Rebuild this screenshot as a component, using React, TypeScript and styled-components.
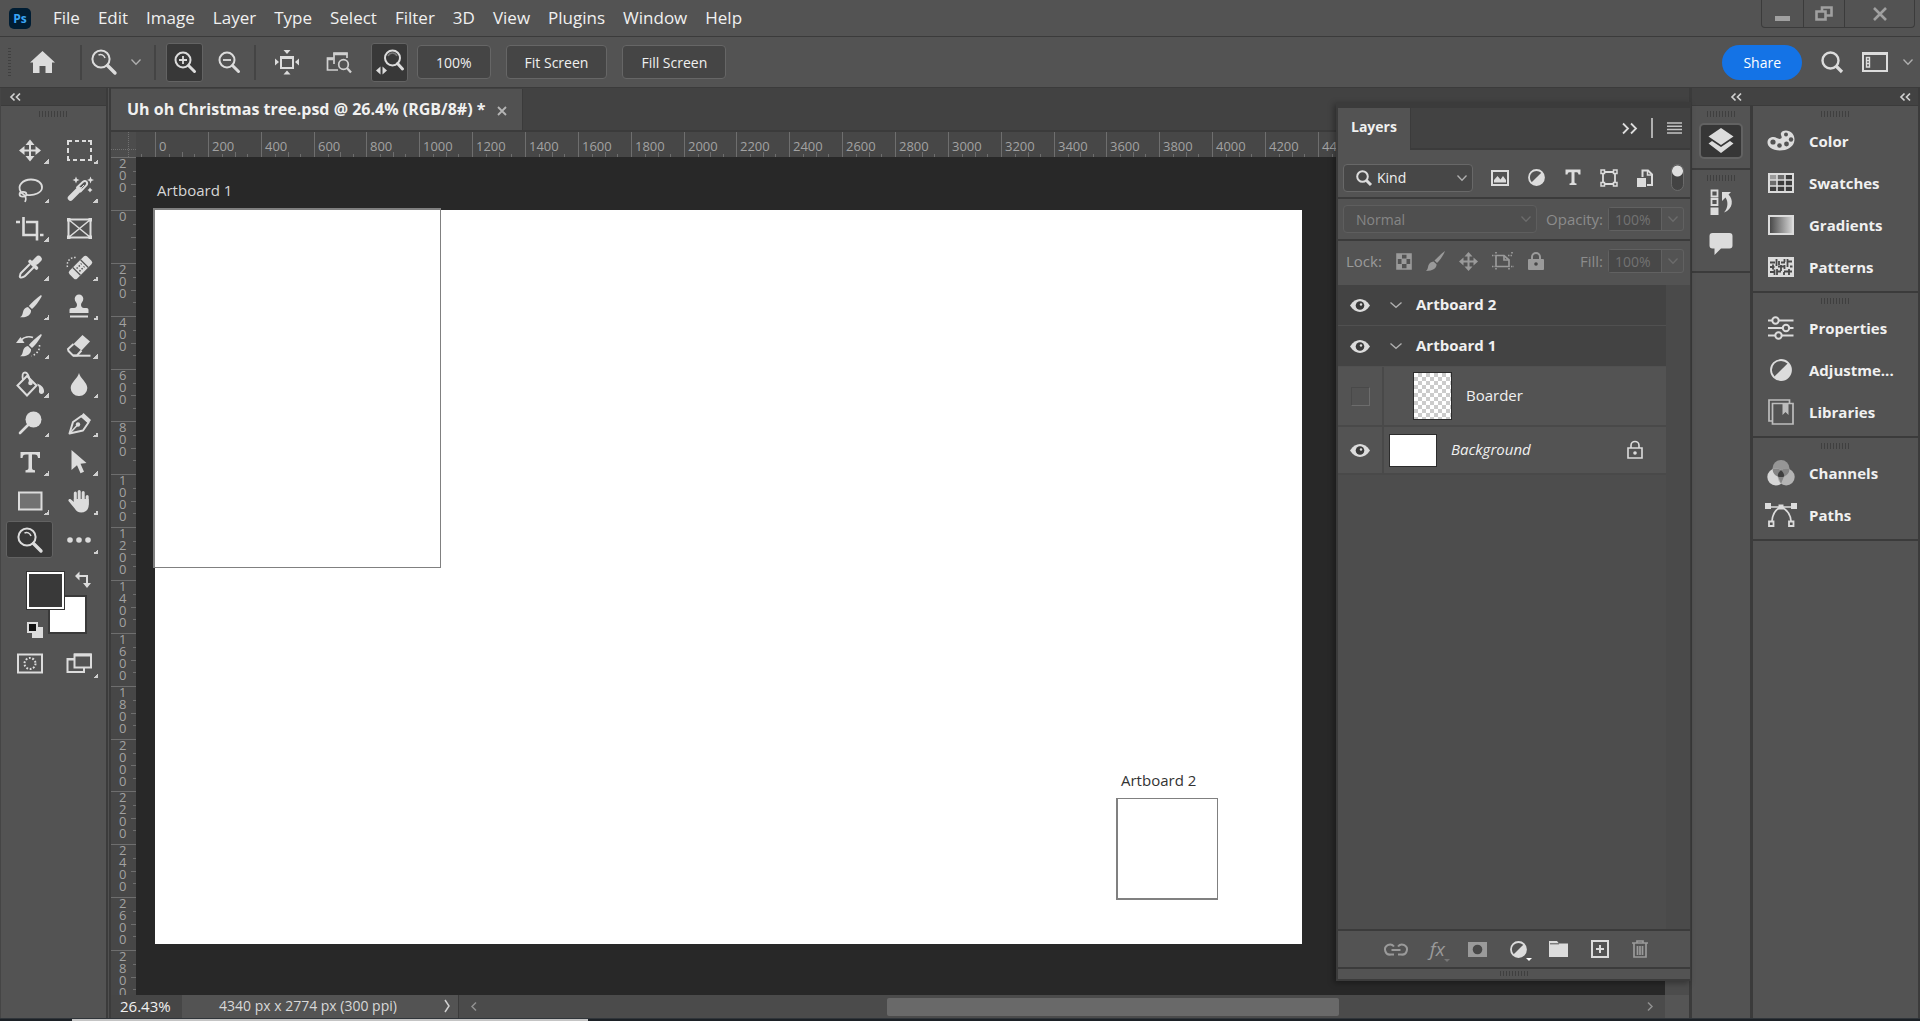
import React from "react";
import styled, { createGlobalStyle, css } from "styled-components";

const c = {
  panel: "#535353",
  strip: "#424242",
  line: "#3b3b3b",
  canvas: "#282828",
  ruler: "#474747",
  tick: "#6e6e6e",
  icon: "#dcdcdc",
  dim: "#9a9a9a",
  text: "#f0f0f0",
};

const Global = createGlobalStyle`
  * { box-sizing: border-box; }
  body { margin: 0; background: ${c.panel}; overflow: hidden; }
  body, button, input, select { font-family: "Open Sans", "Noto Sans", sans-serif; font-size: 15px; color: ${c.text}; }
  button { border: 0; padding: 0; background: none; }
  svg { display: block; flex: none; overflow: visible; }
`;

/* ---------- icons ---------- */

type IconProps = { w?: number; h?: number; color?: string; sw?: number; children: React.ReactNode };
const Icon = ({ w = 28, h = w, color = c.icon, sw = 2, children }: IconProps) => (
  <svg width={w} height={h} viewBox={`0 0 ${w} ${h}`} fill="none" stroke={color} strokeWidth={sw} color={color} aria-hidden="true">
    {children}
  </svg>
);
const solid = { fill: "currentColor", stroke: "none" };

const MoveIcon = () => (
  <Icon><path d="M14 7v15M6 14.500h16" /><path {...solid} d="M14 3.500l4.500 5.500h-9zM14 25.500l4.500-5.500h-9zM3 14.500l5.500-4.500v9zM25 14.500l-5.500-4.500v9z" /></Icon>
);
const MarqueeIcon = () => (
  <Icon><path d="M3 9V5h4M10 5h4M17 5h4M23 5h3v4M26 12v4M26 19v5h-3M20 24h-5M12 24H8M5 24H3v-4M3 17v-5" /></Icon>
);
const LassoIcon = () => (
  <Icon sw={1.800}><path d="M5 17C.500 10.500 7 4.500 15 4.500c7 0 11.500 4 11 8.500-.6 4.500-7 8-15.500 6.800" /><ellipse cx="7" cy="19.300" rx="3.400" ry="2.400" /><path d="M5 17.500c3 2 6.500 4.500 4 9.500" strokeWidth="1.600" /></Icon>
);
const Spark = ({ x, y, r = 3.500 }: { x: number; y: number; r?: number }) => (
  <path {...solid} d={`M${x} ${y - r}l1 ${r - 1} ${r - 1} 1 -${r - 1} 1 -1 ${r - 1} -1 -${r - 1} -${r - 1} -1 ${r - 1} -1z`} />
);
const WandIcon = () => (
  <Icon><path d="M5.500 23L14 14.500" strokeWidth="5.500" strokeLinecap="round" /><path d="M11.500 13l6.500-6.300c2.600-2 5.300.6 3.500 3.500L15 17" /><path d="M14 15l5-5" strokeWidth="1" /><Spark x={11} y={5} /><Spark x={25.500} y={5} /><Spark x={25} y={15} r={2.500} /></Icon>
);
const CropIcon = () => (
  <Icon sw={2.600}><path d="M0 8h4M7.500 3v18h13.500M24 21h3.500M10 8h11v18.500" /></Icon>
);
const FrameIcon = () => (
  <Icon><path d="M3.500 5.500h22v18h-22z" /><path d="M3.500 5.500l22 18M25.500 5.500l-22 18" strokeWidth="1.600" /><path {...solid} d="M2 4h3.500v3.500H2zM23.500 4H27v3.500h-3.500zM2 21.500h3.500V25H2zM23.500 21.500H27V25h-3.500z" /></Icon>
);
const DropperIcon = () => (
  <Icon><path d="M14 11L5 20c-1 1-.6 2-1.200 3.200 0 1 1 1.600 1.800 1.200C7 24 8 24 9 23l9-9" /><path d="M20 8.500l2.500-2.500" strokeWidth="6.500" strokeLinecap="round" /><path d="M14 8.500l6.500 6.500" strokeWidth="3.600" strokeLinecap="round" /><path d="M16 11.500l3-3" strokeWidth="5" /></Icon>
);
const BandageIcon = () => (
  <Icon>
    <g transform="rotate(-45 15.500 14.500)"><rect {...solid} x="3" y="9" width="25" height="11" rx="2.500" /><path d="M10 9v11M21 9v11" stroke={c.panel} strokeWidth="1.200" />
      <path d="M12 12.500h7M12 16.500h7" stroke={c.panel} strokeWidth="1.500" strokeDasharray="1.500 1.500" /></g>
    <path d="M2.500 14c-1.500-6 3.500-11 10-9" strokeWidth="1.500" strokeDasharray="1.500 1.800" />
  </Icon>
);
const brushPaths = (
  <>
    <path {...solid} d="M25 3c.8.500.8 1 .5 1.700C22.500 10 19 14.500 16 17l-3.200-3C16 10.500 20 6.500 25 3z" />
    <path {...solid} d="M12 15l3 3.200c.4 4-3.500 7.800-11 7 2.300-1.200 2.500-3 3-5.200.600-2.800 2.600-4.600 5-5z" />
  </>
);
const BrushIcon = () => <Icon>{brushPaths}</Icon>;
const HistoryBrushIcon = () => (
  <Icon>{brushPaths}<path {...solid} d="M0 12l4.500-6 4 6z" /><path d="M5 9c3-3 8-4 12-2.500" strokeWidth="1.700" /><path d="M23.500 14c.5 5-2.500 9-8 11" strokeWidth="1.600" strokeDasharray="1.600 2" /></Icon>
);
const StampIcon = () => (
  <Icon><path {...solid} d="M14 2.500a4.300 4.300 0 014.300 4.300c0 3-2.300 3.700-2.300 6 0 1.700 1 3.200 3 3.200h2.500c1.300 0 2 .8 2 2V21H4.500v-3c0-1.200.7-2 2-2H9c2 0 3-1.500 3-3.200 0-2.300-2.300-3-2.300-6A4.300 4.300 0 0114 2.500z" /><path d="M5 24.500h18" /></Icon>
);
const EraserIcon = () => (
  <Icon><path {...solid} d="M17.500 4l7.500 6.500-8.500 9-8-6.500z" /><path d="M8.500 13L3 18l.5 2 4.500 4.500h4l4.500-5" /><path d="M8 24.700h17.500" /></Icon>
);
const BucketIcon = () => (
  <Icon><path d="M11 6l9.500 9.500L11 25.500l-9.500-10z" /><path d="M7 10C6 5 6.500 2.500 9 2.500c2.500 0 4 3 5 9" strokeWidth="1.800" /><circle {...solid} cx="14.500" cy="13" r="2.300" /><path {...solid} d="M21 13.500c5 1.500 7.500 5 7 8.500-.500 2.500-4.500 2.500-5 0-.3-1.500.5-3-.2-5z" /></Icon>
);
const DropIcon = () => (
  <Icon><path {...solid} d="M14 3c1 5 8.300 9.500 8.300 15A8 8 0 0114 26a8 8 0 01-8.300-8C5.700 12.500 13 8 14 3z" /></Icon>
);
const DodgeIcon = () => (
  <Icon><circle {...solid} cx="17.500" cy="10.500" r="8" /><path d="M12 16l-8 8" strokeWidth="2.600" strokeLinecap="round" /></Icon>
);
const PenIcon = () => (
  <Icon><path d="M4.500 24.500L8 13l8.500-6 7 6.500-5.500 8z" strokeLinejoin="round" /><path d="M5 24l7-7.500" strokeWidth="1.600" /><circle {...solid} cx="13" cy="15.500" r="2.200" /><path {...solid} d="M18.500 4l7.500 7-2.500 3.500-8-7z" /></Icon>
);
const TypeIcon = () => (
  <Icon><path {...solid} d="M4.500 4h19.500v6H22c-.3-2.500-1-3.500-3.500-3.500h-2.500v13c0 2 .5 2.500 3 2.700V24.500H9.500v-2.300c2.500-.2 3-.7 3-2.700v-13H10C7.500 6.500 6.800 7.500 6.500 10h-2z" /></Icon>
);
const SelectIcon = () => (
  <Icon><path {...solid} d="M6.500 2L21.500 15l-6 .8 3.500 8-3.500 1.500-3.500-8L6.500 22z" /></Icon>
);
const RectIcon = () => <Icon><rect x="3" y="5.500" width="22.500" height="17" fill="#727272" /></Icon>;
const HandIcon = () => (
  <Icon>
    <path d="M10.300 15V6M14.200 14V4.500M18.200 15V5.500M22.200 17V9.500" strokeWidth="3" strokeLinecap="round" />
    <path {...solid} d="M8.800 12h14.900v6c0 4.500-3 7.500-7.500 7.500-3 0-5-1.500-6.500-4L3.500 14c-.5-1.500 1-2.600 2.500-1.500L9 15z" />
  </Icon>
);
const ZoomIcon = () => (
  <Icon><circle cx="11" cy="11" r="8.600" /><path d="M8.500 7c2.500-1.200 5.500 0 6.500 3" strokeWidth="1.500" /><path d="M17.500 17.500l7.500 7.500" strokeWidth="3.400" strokeLinecap="round" /></Icon>
);
const DotsIcon = () => (
  <Icon><circle {...solid} cx="5" cy="14" r="2.800" /><circle {...solid} cx="14" cy="14" r="2.800" /><circle {...solid} cx="23" cy="14" r="2.800" /></Icon>
);
const QuickMaskIcon = () => (
  <Icon><path d="M2 4.500h24v18H2z" /><circle cx="14" cy="13.500" r="5.500" strokeDasharray="1.800 1.650" /></Icon>
);
const ScreenModeIcon = () => (
  <Icon><path d="M9 9H2.500v13H19v-4M2 9.500h7" /><path d="M9.500 4.500h16.500v13H9.500z" fill={c.panel} /><path d="M9 5h17.500" strokeWidth="3" /></Icon>
);
const SwapIcon = () => (
  <Icon w={16} h={17} sw={2}><path d="M3 5h9v8" /><path {...solid} d="M0 5l4.500-4.500v9zM12 17l-4-5h8z" /></Icon>
);
const DefaultIcon = () => (
  <Icon w={16}><path {...solid} d="M5 5h11v11H5z" /><rect x="1" y="1" width="9" height="9" fill="#111" /></Icon>
);
const HomeIcon = () => (
  <Icon w={25} h={22}><path {...solid} d="M12.500 0L25 11.500h-3V22h-6.500v-7h-6v7H3V11.500H0z" /></Icon>
);
const Glass = ({ sign }: { sign?: "plus" | "minus" }) => (
  <Icon w={22}><circle cx="9" cy="9" r="7.500" /><path d="M14.500 14.500l6 6" strokeWidth="3" strokeLinecap="round" />{sign && <path d={sign === "plus" ? "M5 9h8M9 5v8" : "M5 9h8"} strokeWidth="1.800" />}</Icon>
);
const ResizeWindowIcon = () => (
  <Icon w={26}><path d="M7 8h12v11H7z" /><path d="M6 8.500h14" strokeWidth="3" /><path {...solid} d="M13 5L9.500 1h7zM13 21.500L9.500 25.500h7zM5 13L1 9.500v7zM21 13l4-3.500v7z" /></Icon>
);
const ZoomAllIcon = () => (
  <Icon w={26} h={22} sw={1.700} color="#d0d0d0"><path d="M8 7H1.500v12H12M8 13V2H21v5" /><path d="M7.500 3h14M1 8h6.500" strokeWidth="2.600" /><circle cx="17.500" cy="13.500" r="4.800" fill={c.panel} /><path d="M21 17l4 4.500" strokeWidth="2.300" /></Icon>
);
const ScrubIcon = () => (
  <Icon w={28} h={26}><circle cx="16.500" cy="9" r="7.500" /><path d="M12 7c2-4 7-4 9 0" stroke="#777" strokeWidth="1.500" /><path d="M21.500 14.500l5 5.500" strokeWidth="3" strokeLinecap="round" /><path {...solid} d="M0 21.500l4.500-4v8zM11 21.500l-4.500-4v8z" /></Icon>
);
const SearchIcon = () => (
  <Icon w={22} sw={2.400}><circle cx="9.500" cy="9.500" r="8" /><path d="M15 15l6 6" strokeWidth="3.200" /></Icon>
);
const WorkspaceIcon = () => (
  <Icon w={26} h={20}><path d="M1 1h24v18H1z" /><path d="M0 1.500h26" strokeWidth="3" /><path d="M4.500 5.500h3v9.500h-3zM4.500 8.500h3M4.500 11.500h3" strokeWidth="1.400" /></Icon>
);
const Chevron = ({ color = "#b0b0b0", w = 10 }: { color?: string; w?: number }) => (
  <Icon w={w} h={6} color={color} sw={1.300}><path d={`M.5 .5L${w / 2} 5.300 ${w - 0.5} .5`} /></Icon>
);
const Collapse = () => <Icon w={11} h={8} sw={1.700} color="#d0d0d0"><path d="M4.500.5L1 4l3.500 3.500M10 .5L6.500 4 10 7.500" /></Icon>;

const HalfIcon = ({ s = 18 }: { s?: number }) => (
  <Icon w={s}><circle cx={s / 2} cy={s / 2} r={s / 2 - 1} strokeWidth="1.800" /><path {...solid} transform={`rotate(-45 ${s / 2} ${s / 2})`} d={`M1 ${s / 2}a${s / 2 - 1} ${s / 2 - 1} 0 00${s - 2} 0z`} /></Icon>
);
const PictureIcon = () => <Icon w={18} h={16}><path d="M1 1h16v14H1z" /><path {...solid} d="M3 12.500V10l3.500-4 3 3.500L12 6l3 4v2.500z" /></Icon>;
const SmallType = () => <Icon w={16} h={17}><path {...solid} d="M.5.5h15v5h-2c-.2-1.700-.8-2.300-2.500-2.300H9.500v9.300c0 1.500.3 1.800 2 2v1.500h-7V14.500c1.700-.2 2-.5 2-2V3.200H5C3.300 3.200 2.700 3.800 2.500 5.500h-2z" /></Icon>;
const ShapeIcon = () => (
  <Icon w={18}><path d="M3 3h12v12H3z" strokeWidth="1.800" /><path d="M1 1h3.500v3.500H1zM13.500 1H17v3.500h-3.500zM1 13.500h3.500V17H1zM13.500 13.500H17V17h-3.500z" strokeWidth="1.500" fill={c.panel} /></Icon>
);
const SmartIcon = () => (
  <Icon w={16} h={18}><path d="M5.500 8V1.500h5.500L15 5.500V16h-5" /><path d="M10.500 1.500V6H15" strokeWidth="1.500" /><path {...solid} d="M0 9h9v9H0z" /></Icon>
);
const CheckerIcon = () => (
  <Icon w={16} h={17} color={c.dim}><path d="M1 1h14v15H1z" strokeWidth="1.600" /><path {...solid} d="M1 1h5v5H1zM10.500 1H15v5h-4.500zM5.500 5.500h5V11h-5zM1 11h5v5H1zM10.500 11H15v5h-4.500z" /></Icon>
);
const SmallBrush = () => (
  <Icon w={19} h={20} color={c.dim}><path {...solid} d="M19 0c-1.500 4-4.500 8.500-8 12L8.500 9.500C12 6 15.500 2.500 19 0z" /><path {...solid} d="M7.500 10.500l3 2.800C11 17 7 20 0 20c2-1.500 1.700-3.300 2.300-5.300.6-2.200 2.700-4 5.200-4.200z" /></Icon>
);
const SmallMove = () => (
  <Icon w={19} color={c.dim}><path d="M9.500 3v13M3 9.500h13" /><path {...solid} d="M9.500 0l4 4.500h-8zM9.500 19l4-4.500h-8zM0 9.500l4.500-4v8zM19 9.500l-4.500-4v8z" /></Icon>
);
const ArtboardLock = () => (
  <Icon w={22} h={18} color={c.dim} sw={1.700}><path d="M4 3.500h8l5 4.500v6.500H4z" /><path d="M12 3.500V8h5" /><path d="M0 3.500h3M4 0v2M19 14.500h3M17 16v2M0 14.500h3M4 16v2M16 3.500h4M20 0v2" strokeDasharray="1.500 1" /></Icon>
);
const LockSolid = () => (
  <Icon w={16} h={18} color={c.dim}><path d="M4 8V5a4 4 0 018 0v3" /><rect {...solid} y="7" width="16" height="11" rx="1" /><circle cx="8" cy="12" r="1.800" fill="#474747" stroke="none" /></Icon>
);
const LockOutline = () => (
  <Icon w={16} h={18} sw={1.600}><path d="M4 7V4.500a4 4 0 018 0V7" /><path d="M1 7h14v10H1z" /><circle {...solid} cx="8" cy="12" r="1.800" /></Icon>
);
const EyeIcon = () => (
  <Icon w={20} h={13}><path {...solid} d="M0 6.500C3 2 6.500 0 10 0s7 2 10 6.500C17 11 13.500 13 10 13S3 11 0 6.500z" /><circle cx="10" cy="6.500" r="4.300" fill="#3a3a3a" stroke="none" /><circle {...solid} cx="11" cy="5.500" r="1.200" /></Icon>
);
const LinkIcon = () => (
  <Icon w={22} h={13} color={c.dim}><path d="M9 3.500A5 5 0 106 11.500h3M13 3.500a5 5 0 113 8h-3" /><path d="M6.500 7h9" /></Icon>
);
const MaskIcon = () => (
  <Icon w={19} h={15} color={c.dim}><path {...solid} d="M0 0h19v15H0z" /><circle cx="9.500" cy="7.500" r="4.800" fill="#484848" stroke="none" /></Icon>
);
const FolderIcon = () => <Icon w={19} h={16}><path {...solid} d="M0 0h8l2 2.500h9V16H0z" /><path d="M1 2.800h9" stroke={c.panel} strokeWidth="1" /></Icon>;
const PlusBoxIcon = () => <Icon w={18}><path d="M1 1h16v16H1zM5 9h8M9 5v8" /></Icon>;
const TrashIcon = () => (
  <Icon w={16} h={18} color={c.dim} sw={1.700}><path d="M0 3h16M5 3V1h6v2M2 3.500V17h12V3.500M5.500 6v9M8 6v9M10.500 6v9" /></Icon>
);
const LayersIcon = () => (
  <Icon w={26} h={26}><path {...solid} d="M13 0l12.500 8.500L13 17 .5 8.500z" /><path {...solid} d="M.5 15.500L4 13l9 6 9-6 3.500 2.500L13 25z" /></Icon>
);
const HistoryIcon = () => (
  <Icon w={24} h={26}><path d="M2.500 1.500h6v6h-6zM2.500 10h6v6h-6z" strokeWidth="1.800" /><path {...solid} d="M1.500 18.500h8V26h-8z" /><path {...solid} d="M13 3h9l-2.500 2.500C24.500 10 24.500 20 15 23.500 19 19 19.500 13 16.500 8.500L13 12z" /></Icon>
);
const CommentIcon = () => (
  <Icon w={24} h={22}><path {...solid} d="M3.500 0h17a3 3 0 013 3v9.500a3 3 0 01-3 3H12L5.500 22v-6.500h-2a3 3 0 01-3-3V3a3 3 0 013-3z" /></Icon>
);
const PaletteIcon = () => (
  <Icon w={28} h={22}><path {...solid} d="M14 3c2-3.500 8-3 11 0 2.500 3 3 6 2 9.500-1.500 4.500-7 8-14 8C5 20.500.500 16.500.500 12.500c0-4 3-5.500 6-5.500 3 0 5 3 7.500 1.500 2-1.500-1-3.500 0-5.500z" /><g fill={c.panel} stroke="none"><circle cx="19" cy="4.500" r="2" /><circle cx="24" cy="9.500" r="2.200" /><circle cx="6" cy="12" r="2.600" /><circle cx="12.500" cy="15.500" r="2.300" /><circle cx="19.500" cy="14" r="2.400" /></g></Icon>
);
const SwatchGridIcon = () => (
  <Icon w={26} h={20}><path d="M1 1h24v18H1z" fill="#3c3c3c" /><path {...solid} d="M1 1h8v6H1z" opacity=".6" /><path {...solid} d="M9 1h8v6H9zM1 7h8v6H1z" opacity=".3" /><path d="M9 1v18M17 1v18M1 7h24M1 13h24" strokeWidth="1.600" /></Icon>
);
const GradientIcon = () => (
  <Icon w={26} h={20}><defs><linearGradient id="ramp"><stop offset="0" stopColor="#444" /><stop offset="1" stopColor="#d8d8d8" /></linearGradient></defs><path d="M1 1h24v18H1z" fill="url(#ramp)" /></Icon>
);
const PatternIcon = () => (
  <Icon w={26} h={20}>
    <path {...solid} d="M0 0h26v20H0z" />
    <path d="M2 5.500h5M8.500 2v7M13 5.500h4M16.500 2v3M19.500 2v8M19.500 4.500h4.500M2 10h4.500M5 7.500v5M11 4v4M10 9.500h6M13 8v6M16.500 8v4M22 9.500h2.500M2 15h4M6.500 12.500V18M9 12v6M9 14.500h4M16 15v3M16 14.500h8M21 12v6" stroke="#474747" strokeWidth="1.800" />
  </Icon>
);
const SlidersIcon = () => (
  <Icon w={26} h={24}><path d="M0 4.500h4M11 4.500h14.500M0 12h14M21.500 12h4M0 19.500h7M14 19.500h11.500" strokeWidth="1.800" /><circle cx="7.500" cy="4.500" r="3.200" /><circle cx="18" cy="12" r="3.200" /><circle cx="10.500" cy="19.500" r="3.200" /></Icon>
);
const LibrariesIcon = () => (
  <Icon w={26} color="#bdbdbd" sw={1.700}><path d="M4.500 22H1V1h20.500v3M4.500 4.500H25V25H4.500z" /><path {...solid} d="M14.500 4.500h6V16l-3-3-3 3z" /></Icon>
);
const ChannelsIcon = () => (
  <Icon w={28} h={26}><g stroke="none"><circle cx="14" cy="8.500" r="8.500" fill="#969696" /><circle cx="8.800" cy="17" r="8.500" fill="#d6d6d6" /><circle cx="19.200" cy="17" r="8.500" fill="#b4b4b4" /><path fill="#848484" d="M5.500 9.200A8.500 8.500 0 0114 10.300a8.500 8.500 0 018.500-1.200A8.500 8.500 0 0117 16.500L14 23.700l-3-7.200a8.500 8.500 0 01-5.500-7.300z" /><path fill="#3e3e3e" d="M14 10.200c2.500 2 3.200 4 3.200 6.200-2 .8-4.400.8-6.400 0 0-2.200.7-4.200 3.200-6.200z" /></g></Icon>
);
const PathsIcon = () => (
  <Icon w={32} h={24}><path d="M5 4h22M15 4.500C9.500 7 7.500 12 7 18M17 4.500c5.500 2.500 8.500 7.500 9 13.500" strokeWidth="1.700" /><path {...solid} d="M0 0h6v6H0zM26 0h6v6h-6zM13.500 1.500h5v5h-5z" /><path d="M4 18.500h4.500V23H4zM24 18.500h4.500V23H24z" strokeWidth="1.800" fill={c.panel} /></Icon>
);

/* ---------- shell ---------- */

const Shell = styled.div`
  display: flex;
  flex-direction: column;
  height: 100vh;
  min-height: 720px;
  background: ${c.panel};
`;
const MenuBar = styled.header`
  display: flex;
  align-items: center;
  height: 37px;
  padding-left: 9px;
  border-bottom: 1px solid ${c.line};
`;
const Logo = styled.span`
  display: grid;
  place-items: center;
  width: 22px;
  height: 21px;
  border-radius: 5px;
  background: #001d33;
  color: #3aa5f5;
  font-size: 12px;
  font-weight: 700;
`;
const Menus = styled.nav`
  display: flex;
  gap: 18px;
  margin-left: 22px;
`;
const MenuButton = styled.button`
  font-size: 17px;
  line-height: 24px;
`;
const WindowControls = styled.div`
  display: flex;
  align-self: flex-start;
  height: 28px;
  margin: 0 5px 0 auto;
  border: 1px solid ${c.line};
  border-top: 0;
  border-radius: 0 0 4px 4px;
`;
const WindowButton = styled.button<{ $wide?: boolean }>`
  display: grid;
  place-items: center;
  width: ${(p) => (p.$wide ? 70 : 41)}px;
  & + & { border-left: 1px solid ${c.line}; }
`;
const OptionsBar = styled.div`
  display: flex;
  align-items: center;
  height: 51px;
  padding: 0 7px 0 8px;
  border-bottom: 1px solid ${c.line};
`;
const DotGrip = styled.span`
  width: 3px;
  height: 28px;
  background: repeating-linear-gradient(#404040 0 1px, transparent 1px 3px);
`;
const Rule = styled.span`
  width: 2px;
  height: 35px;
  background: #444;
`;
const Group = styled.div<{ $gap?: number; $left?: number; $right?: number; $end?: boolean }>`
  display: flex;
  align-items: center;
  gap: ${(p) => p.$gap ?? 0}px;
  margin-left: ${(p) => (p.$end ? "auto" : `${p.$left ?? 0}px`)};
  margin-right: ${(p) => p.$right ?? 0}px;
`;
const OptionButton = styled.button<{ $on?: boolean }>`
  display: grid;
  place-items: center;
  width: 37px;
  height: 39px;
  border-radius: 3px;
  ${(p) => p.$on && css`background: #383838; border: 1px solid #636363;`}
`;
const PushButton = styled.button`
  height: 34px;
  padding: 0 18px;
  border: 1px solid #666;
  border-radius: 4px;
  background: #454545;
  font-size: 14px;
`;
const ShareButton = styled.button`
  height: 35px;
  padding: 0 21px;
  border-radius: 18px;
  background: #1473e6;
  color: #fff;
  font-size: 14px;
`;
const IconButton = styled.button`
  display: grid;
  place-items: center;
`;

const Body = styled.div`
  display: flex;
  flex: 1;
  min-height: 0;
`;
const Footer = styled.footer`
  height: 3px;
  border-top: 1px solid #30353a;
  background: linear-gradient(90deg, #1c2126 72px, #c4c4c4 72px 588px, #1c2126 588px);
`;

/* ---------- toolbox ---------- */

const Toolbox = styled.aside`
  width: 108px;
  border-left: 1px solid #454545;
  border-right: 2px solid ${c.line};
`;
const StripHeader = styled.div`
  display: flex;
  align-items: center;
  height: 18px;
  background: ${c.strip};
  border-bottom: 1px solid ${c.line};
`;
const CollapseButton = styled(IconButton)<{ $w?: number; $end?: boolean }>`
  flex: ${(p) => (p.$w ? "none" : 1)};
  width: ${(p) => (p.$w ? `${p.$w}px` : "auto")};
  justify-items: ${(p) => (p.$end ? "end" : "start")};
  padding: 0 7px 0 9px;
`;
const Grip = styled.span<{ $h?: number }>`
  display: block;
  width: 29px;
  height: ${(p) => p.$h ?? 6}px;
  margin: 0 auto;
  background: repeating-linear-gradient(90deg, #3f3f3f 0 1px, transparent 1px 3px);
`;
const ToolGrip = styled.div`
  padding: 5px 0 13px;
`;
const ToolGrid = styled.div`
  display: grid;
  grid-template-columns: 49px 49px;
  grid-auto-rows: 39px;
  padding-left: 4px;
`;
const Tool = styled.button<{ $on?: boolean; $more?: boolean }>`
  display: grid;
  place-items: center;
  position: relative;
  margin: 1px;
  border: 1px solid transparent;
  border-radius: 3px;
  ${(p) => p.$on && css`background: #383838; border-color: #626262;`}
  ${(p) => p.$more && css`
    &::after {
      content: "";
      position: absolute;
      right: 3px;
      bottom: 3px;
      width: 5px;
      height: 5px;
      background: linear-gradient(135deg, transparent 50%, #cfcfcf 50%);
    }
  `}
`;
const ColorWell = styled.div`
  position: relative;
  height: 85px;
`;
const Swatch = styled.button<{ $front?: boolean }>`
  position: absolute;
  left: ${(p) => (p.$front ? 26 : 47)}px;
  top: ${(p) => (p.$front ? 13 : 36)}px;
  width: ${(p) => (p.$front ? 37 : 39)}px;
  height: ${(p) => (p.$front ? 37 : 39)}px;
  border: 2px solid ${(p) => (p.$front ? "#fff" : "#3a3a3a")};
  outline: ${(p) => (p.$front ? "1px solid #333" : "none")};
  background: ${(p) => (p.$front ? "#393939" : "#fff")};
`;
const WellButton = styled(IconButton)<{ $corner: "swap" | "reset" }>`
  position: absolute;
  left: ${(p) => (p.$corner === "swap" ? 74 : 26)}px;
  top: ${(p) => (p.$corner === "swap" ? 12 : 63)}px;
`;

/* ---------- document ---------- */

const Doc = styled.main`
  position: relative;
  display: flex;
  flex: 1;
  flex-direction: column;
  min-width: 0;
  border-left: 1px solid #505050;
  border-right: 2px solid ${c.line};
  padding-left: 2px;
  background: ${c.line};
`;
const TabStrip = styled.div`
  display: flex;
  height: 44px;
  padding-top: 1px;
  background: ${c.strip};
  border-bottom: 2px solid ${c.line};
`;
const DocTab = styled.div`
  display: flex;
  align-items: center;
  gap: 12px;
  padding: 0 15px 2px 16px;
  background: #515151;
  border-right: 1px solid ${c.line};
  font-size: 16px;
  font-weight: 700;
`;
const Workspace = styled.div`
  display: grid;
  flex: 1;
  grid-template: 25px minmax(0, 1fr) / 25px minmax(0, 1fr) 24px;
  min-height: 0;
`;
const Corner = styled.div`
  background:
    repeating-linear-gradient(#707070 0 1px, transparent 1px 2px) 17px 0 / 1px 100% no-repeat,
    repeating-linear-gradient(90deg, #707070 0 1px, transparent 1px 2px) 0 17px / 100% 1px no-repeat,
    #4c4c4c;
`;
const HRuler = styled.div`
  display: flex;
  grid-column: 2 / 4;
  overflow: hidden;
  background: ${c.ruler};
`;
const VRuler = styled.div`
  display: flex;
  flex-direction: column;
  overflow: hidden;
  background: ${c.ruler};
`;
const HMark = styled.div`
  display: flex;
  flex: none;
  flex-direction: column;
  justify-content: space-between;
  border-left: 1px solid ${c.tick};
  color: #a2a2a2;
  font-size: 13px;
  line-height: 16px;
  padding-top: 6px;
  & > b { font-weight: 400; height: 14px; padding-left: 3px; }
  & > i { height: 5px; background:
    linear-gradient(${c.tick}, ${c.tick}) 25% 100% / 1px 3px no-repeat,
    linear-gradient(${c.tick}, ${c.tick}) 50% 100% / 1px 5px no-repeat,
    linear-gradient(${c.tick}, ${c.tick}) 75% 100% / 1px 3px no-repeat; }
`;
const VMark = styled.div`
  display: flex;
  flex: none;
  justify-content: space-between;
  border-top: 1px solid ${c.tick};
  color: #a2a2a2;
  font-size: 13px;
  line-height: 12px;
  padding-left: 8px;
  & > b { font-weight: 400; width: 8px; margin-top: -1px; word-break: break-all; }
  & > i { width: 5px; background:
    linear-gradient(${c.tick}, ${c.tick}) 100% 25% / 3px 1px no-repeat,
    linear-gradient(${c.tick}, ${c.tick}) 100% 50% / 5px 1px no-repeat,
    linear-gradient(${c.tick}, ${c.tick}) 100% 75% / 3px 1px no-repeat; }
`;
const Canvas = styled.div`
  position: relative;
  overflow: hidden;
  background: ${c.canvas};
`;
const VScroll = styled.div`
  background: #4c4c4c;
`;
const Paper = styled.div`
  position: absolute;
  left: 19px;
  top: 53px;
  width: 1147px;
  height: 734px;
  background: #fff;
`;
const Artboard = styled.div<{ $second?: boolean }>`
  position: absolute;
  left: ${(p) => (p.$second ? 980 : 17)}px;
  top: ${(p) => (p.$second ? 641 : 51)}px;
  width: ${(p) => (p.$second ? 102 : 288)}px;
  height: ${(p) => (p.$second ? 102 : 360)}px;
  border: solid #808080;
  border-width: ${(p) => (p.$second ? "1px 1px 2px 2px" : "2px 1px 1px 2px")};
  background: #fff;
`;
const ArtboardName = styled.span<{ $second?: boolean }>`
  position: absolute;
  left: ${(p) => (p.$second ? 985 : 21)}px;
  top: ${(p) => (p.$second ? 613 : 23)}px;
  color: ${(p) => (p.$second ? "#333" : "#d6d6d6")};
  font-size: 15px;
  line-height: 20px;
`;
const StatusBar = styled.div`
  display: flex;
  align-items: stretch;
  height: 23px;
  background: ${c.panel};
`;
const ZoomField = styled.input`
  width: 72px;
  padding: 0 0 2px 9px;
  border: 0;
  border-right: 1px solid ${c.panel};
  background: #464646;
`;
const DocInfo = styled.button`
  display: flex;
  align-items: center;
  justify-content: space-between;
  width: 276px;
  padding: 0 8px 2px 36px;
  border-right: 1px solid ${c.line};
  color: #d8d8d8;
  font-size: 14px;
`;
const HScroll = styled.div`
  display: flex;
  flex: 1;
  align-items: center;
  justify-content: space-between;
  padding: 0 12px;
  background: #4b4b4b;
`;
const Track = styled.div`
  display: flex;
  flex: 1;
  justify-content: center;
  height: 18px;
`;
const Thumb = styled.div`
  width: 452px;
  margin-left: 102px;
  border-radius: 2px;
  background: #696969;
`;
const ScrollCorner = styled.div`
  width: 24px;
  background: #555;
`;

/* ---------- layers panel ---------- */

const LayersPanel = styled.section`
  position: absolute;
  top: 14px;
  right: -2px;
  bottom: 37px;
  display: flex;
  flex-direction: column;
  width: 355px;
  border: solid ${c.line};
  border-width: 6px 1px 2px 2px;
  background: ${c.panel};
  box-shadow: -2px 2px 6px rgba(0, 0, 0, 0.35);
`;
const PanelTabs = styled.div`
  display: flex;
  height: 42px;
  background: ${c.strip};
`;
const PanelTab = styled.button`
  padding: 0 13px 6px;
  background: ${c.panel};
  font-size: 14px;
  font-weight: 700;
`;
const PanelTools = styled.div`
  display: flex;
  flex: 1;
  align-items: center;
  justify-content: flex-end;
  gap: 14px;
  padding-right: 8px;
  border-left: 1px solid ${c.line};
  border-bottom: 2px solid ${c.line};
`;
const PanelRow = styled.div<{ $h: number; $top?: number; $bottom?: number; $last?: boolean }>`
  display: flex;
  align-items: center;
  height: ${(p) => p.$h}px;
  padding: ${(p) => p.$top ?? 0}px 6px ${(p) => p.$bottom ?? 0}px 5px;
  border-bottom: ${(p) => (p.$last ? "0" : `2px solid ${c.line}`)};
  color: ${c.dim};
`;
const SelectBox = styled.label<{ $w: number; $dim?: boolean }>`
  display: grid;
  grid-template-columns: auto 1fr auto;
  align-items: center;
  width: ${(p) => p.$w}px;
  height: 28px;
  padding: 0 5px 0 12px;
  border: 1px solid ${(p) => (p.$dim ? "#5e5e5e" : "#686868")};
  border-radius: 4px;
  background: ${(p) => (p.$dim ? "#4f4f4f" : "#474747")};
  & select {
    appearance: none;
    width: 100%;
    height: 26px;
    padding: 0 0 0 ${(p) => (p.$dim ? 0 : 5)}px;
    border: 0;
    outline: 0;
    background: none;
    font-size: 14px;
    color: ${(p) => (p.$dim ? "#868686" : c.text)};
    opacity: 1;
  }
`;
const FilterIcons = styled.div`
  display: flex;
  flex: 1;
  align-items: center;
  justify-content: space-between;
  padding: 0 18px;
`;
const FilterSwitch = styled.input`
  appearance: none;
  width: 13px;
  height: 27px;
  margin: 0;
  border: 1px solid #6a6a6a;
  border-radius: 7px;
  background: radial-gradient(circle at 50% 6px, #dedede 5px, #434343 6px);
`;
const ValueLabel = styled.label`
  display: flex;
  align-items: center;
  gap: 5px;
  margin-left: auto;
  color: #8c8c8c;
`;
const ValueBox = styled.span`
  display: flex;
  width: 76px;
  height: 24px;
  border: 1px solid #616161;
  border-radius: 3px;
  & input {
    width: 53px;
    padding: 0 0 0 6px;
    border: 0;
    border-right: 1px solid #616161;
    background: #484848;
    font-size: 14px;
    color: #727272;
  }
  & button { display: grid; flex: 1; place-items: center; }
`;
const LockTools = styled.div`
  display: flex;
  align-items: center;
  gap: 14px;
  margin-left: 14px;
`;
const LayerArea = styled.div`
  display: flex;
  flex: 1;
  min-height: 0;
  background: #4a4a4a;
`;
const LayerList = styled.ul`
  flex: 1;
  margin: 0;
  padding: 0;
  list-style: none;
  background: #4d4d4d;
`;
const LayerScroll = styled.div`
  width: 24px;
  background: #4a4a4a;
`;
const LayerItem = styled.li<{ $kind: "board" | "layer"; $h: number }>`
  display: flex;
  align-items: center;
  height: ${(p) => p.$h}px;
  border-bottom: ${(p) => (p.$kind === "board" ? "1px solid #505050" : "2px solid #494949")};
  background: ${(p) => (p.$kind === "board" ? "#434343" : c.panel)};
  font-weight: ${(p) => (p.$kind === "board" ? 700 : 400)};
`;
const EyeCell = styled.button<{ $line?: boolean }>`
  display: grid;
  align-self: stretch;
  place-items: center;
  width: 46px;
  border-right: 2px solid ${(p) => (p.$line ? "#494949" : "transparent")};
`;
const EmptyEye = styled.span`
  width: 19px;
  height: 19px;
  border: 1px solid #494949;
  border-right-color: #6c6c6c;
  border-bottom-color: #6c6c6c;
`;
const LayerName = styled.span<{ $italic?: boolean }>`
  flex: 1;
  margin-left: 14px;
  padding-bottom: 2px;
  font-style: ${(p) => (p.$italic ? "italic" : "normal")};
`;
const Thumbnail = styled.span<{ $clear?: boolean }>`
  width: ${(p) => (p.$clear ? 39 : 48)}px;
  height: ${(p) => (p.$clear ? 48 : 33)}px;
  margin-left: ${(p) => (p.$clear ? 29 : 5)}px;
  border: 1px solid #2c2c2c;
  background: ${(p) => (p.$clear ? "repeating-conic-gradient(#cbcbcb 0 25%, #fff 0 50%) 0 0 / 8px 8px" : "#fff")};
`;
const PanelFooter = styled.div`
  display: flex;
  align-items: center;
  justify-content: space-between;
  height: 40px;
  padding: 0 42px 0 47px;
  border: solid ${c.line};
  border-width: 2px 0;
`;
const FooterButton = styled(IconButton)<{ $caret?: string }>`
  position: relative;
  &::after {
    content: "";
    display: ${(p) => (p.$caret ? "block" : "none")};
    position: absolute;
    right: -5px;
    bottom: -3px;
    border: 3px solid transparent;
    border-bottom: 0;
    border-top-color: ${(p) => p.$caret};
  }
`;
const Fx = styled.span`
  color: ${c.dim};
  font-size: 19px;
  font-style: italic;
  line-height: 20px;
`;
const PanelGrip = styled.div`
  height: 10px;
  padding-top: 2px;
`;

/* ---------- docks ---------- */

const DockArea = styled.aside`
  display: flex;
  flex-direction: column;
  width: 229px;
  border-right: 2px solid ${c.line};
  border-left: 1px solid ${c.line};
`;
const DockColumns = styled.div`
  display: flex;
  flex: 1;
`;
const DockColumn = styled.div<{ $narrow?: boolean }>`
  width: ${(p) => (p.$narrow ? "61px" : "auto")};
  flex: ${(p) => (p.$narrow ? "none" : 1)};
  border-right: ${(p) => (p.$narrow ? `3px solid ${c.line}` : "0")};
`;
const DockGroup = styled.div`
  display: flex;
  flex-direction: column;
  padding: 5px 0 3px;
  border-bottom: 2px solid ${c.line};
`;
const DockRows = styled.div<{ $icons?: boolean }>`
  display: flex;
  flex-direction: column;
  align-items: ${(p) => (p.$icons ? "center" : "stretch")};
  padding: ${(p) => (p.$icons ? "0 0 3px" : "3px 0 0")};
`;
const DockRow = styled.button`
  display: grid;
  grid-template-columns: 32px 1fr;
  align-items: center;
  justify-items: center;
  gap: 12px;
  height: 42px;
  padding: 0 8px 0 12px;
  font-size: 15px;
  font-weight: 700;
  & > span { justify-self: start; }
`;
const DockIconButton = styled.button<{ $on?: boolean }>`
  display: grid;
  place-items: center;
  width: 44px;
  height: ${(p) => (p.$on ? 36 : 42)}px;
  margin: ${(p) => (p.$on ? "6px 0 3px" : "0")};
  border-radius: 5px;
  ${(p) => p.$on && css`background: #363636; border: 2px solid #626262;`}
`;

/* ---------- data ---------- */

const menus = ["File", "Edit", "Image", "Layer", "Type", "Select", "Filter", "3D", "View", "Plugins", "Window", "Help"];

const tools: [string, React.FC, boolean][] = [
  ["Move", MoveIcon, true], ["Marquee", MarqueeIcon, true],
  ["Lasso", LassoIcon, true], ["Magic wand", WandIcon, true],
  ["Crop", CropIcon, true], ["Frame", FrameIcon, false],
  ["Eyedropper", DropperIcon, true], ["Healing brush", BandageIcon, true],
  ["Brush", BrushIcon, true], ["Clone stamp", StampIcon, true],
  ["History brush", HistoryBrushIcon, true], ["Eraser", EraserIcon, true],
  ["Paint bucket", BucketIcon, true], ["Blur", DropIcon, true],
  ["Dodge", DodgeIcon, true], ["Pen", PenIcon, true],
  ["Type", TypeIcon, true], ["Path selection", SelectIcon, true],
  ["Rectangle", RectIcon, true], ["Hand", HandIcon, true],
  ["Zoom", ZoomIcon, false], ["More tools", DotsIcon, true],
];

const dockGroups: [string, React.FC][][] = [
  [["Color", PaletteIcon], ["Swatches", SwatchGridIcon], ["Gradients", GradientIcon], ["Patterns", PatternIcon]],
  [["Properties", SlidersIcon], ["Adjustme...", () => <HalfIcon s={22} />], ["Libraries", LibrariesIcon]],
  [["Channels", ChannelsIcon], ["Paths", PathsIcon]],
];

// One labelled ruler division is 200 document pixels at 26.43 % zoom.
const division = 200 * 0.2643;
const originX = 19;
const markSize = (i: number) => Math.round((i + 1) * division) - Math.round(i * division);
const hMarks = Array.from({ length: 29 }, (_, i) => i);
const vMarks = Array.from({ length: 16 }, (_, i) => i - 1);

const TopRuler = () => (
  <HRuler>
    <HMark style={{ width: markSize(-1), marginLeft: originX - markSize(-1) }}><b /><i /></HMark>
    {hMarks.map((i) => (
      <HMark key={i} style={{ width: markSize(i) }}><b>{i * 200}</b><i /></HMark>
    ))}
  </HRuler>
);
const SideRuler = () => (
  <VRuler>
    {vMarks.map((i) => (
      <VMark key={i} style={{ height: markSize(i) }}><b>{Math.abs(i) * 200}</b><i /></VMark>
    ))}
  </VRuler>
);

const Value = ({ label }: { label: string }) => (
  <ValueLabel>
    {label}:
    <ValueBox>
      <input defaultValue="100%" aria-label={label} />
      <button aria-label={`${label} slider`}><Chevron color="#6c6c6c" /></button>
    </ValueBox>
  </ValueLabel>
);

export default function App() {
  return (
    <Shell>
      <Global />
      <MenuBar>
        <Logo>Ps</Logo>
        <Menus>{menus.map((m) => <MenuButton key={m}>{m}</MenuButton>)}</Menus>
        <WindowControls>
          <WindowButton aria-label="Minimize"><Icon w={15} h={5} color="#a0a0a0"><path {...solid} d="M0 0h15v5H0z" transform="translate(0 5)" /></Icon></WindowButton>
          <WindowButton aria-label="Restore"><Icon w={18} h={15} color="#a0a0a0" sw={2.600}><path d="M7 1.500h9.500v8H7z" /><path d="M1.500 5.500h9v8h-9z" fill={c.panel} /></Icon></WindowButton>
          <WindowButton $wide aria-label="Close"><Icon w={14} h={12} color="#a0a0a0" sw={2.600}><path d="M1 0l12 12M13 0L1 12" /></Icon></WindowButton>
        </WindowControls>
      </MenuBar>

      <OptionsBar>
        <DotGrip />
        <Group $left={19} $right={25}><IconButton aria-label="Home"><HomeIcon /></IconButton></Group>
        <Rule />
        <Group $left={8} $gap={13} $right={13}>
          <IconButton aria-label="Zoom tool"><ZoomIcon /></IconButton>
          <IconButton aria-label="Tool presets"><Chevron /></IconButton>
        </Group>
        <Rule />
        <Group $left={10} $gap={7} $right={7}>
          <OptionButton $on aria-label="Zoom in"><Glass sign="plus" /></OptionButton>
          <OptionButton aria-label="Zoom out"><Glass sign="minus" /></OptionButton>
        </Group>
        <Rule />
        <Group $left={12} $gap={15} $right={14}>
          <OptionButton aria-label="Resize windows to fit"><ResizeWindowIcon /></OptionButton>
          <OptionButton aria-label="Zoom all windows"><ZoomAllIcon /></OptionButton>
        </Group>
        <OptionButton $on aria-label="Scrubby zoom"><ScrubIcon /></OptionButton>
        <Group $left={9} $gap={15}>
          <PushButton>100%</PushButton>
          <PushButton>Fit Screen</PushButton>
          <PushButton>Fill Screen</PushButton>
        </Group>
        <Group $gap={19} $end>
          <ShareButton>Share</ShareButton>
          <IconButton aria-label="Search"><SearchIcon /></IconButton>
          <Group $gap={15}>
            <IconButton aria-label="Workspace"><WorkspaceIcon /></IconButton>
            <IconButton aria-label="Workspace menu"><Chevron /></IconButton>
          </Group>
        </Group>
      </OptionsBar>

      <Body>
        <Toolbox>
          <StripHeader><CollapseButton aria-label="Collapse tools"><Collapse /></CollapseButton></StripHeader>
          <ToolGrip><Grip /></ToolGrip>
          <ToolGrid>
            {tools.map(([name, Glyph, more]) => (
              <Tool key={name} aria-label={name} $more={more} $on={name === "Zoom"}><Glyph /></Tool>
            ))}
          </ToolGrid>
          <ColorWell>
            <Swatch aria-label="Background color" />
            <Swatch $front aria-label="Foreground color" />
            <WellButton $corner="swap" aria-label="Swap colors"><SwapIcon /></WellButton>
            <WellButton $corner="reset" aria-label="Default colors"><DefaultIcon /></WellButton>
          </ColorWell>
          <ToolGrid>
            <Tool aria-label="Quick mask"><QuickMaskIcon /></Tool>
            <Tool aria-label="Screen mode" $more><ScreenModeIcon /></Tool>
          </ToolGrid>
        </Toolbox>

        <Doc>
          <TabStrip>
            <DocTab>
              Uh oh Christmas tree.psd @ 26.4% (RGB/8#) *
              <IconButton aria-label="Close document"><Icon w={10} color="#b5b5b5" sw={1.800}><path d="M1 1l8 8M9 1L1 9" transform="translate(0 2)" /></Icon></IconButton>
            </DocTab>
          </TabStrip>
          <Workspace>
            <Corner />
            <TopRuler />
            <SideRuler />
            <Canvas>
              <Paper />
              <ArtboardName>Artboard 1</ArtboardName>
              <Artboard />
              <ArtboardName $second>Artboard 2</ArtboardName>
              <Artboard $second />
            </Canvas>
            <VScroll />
          </Workspace>
          <StatusBar>
            <ZoomField defaultValue="26.43%" aria-label="Zoom level" />
            <DocInfo>
              4340 px x 2774 px (300 ppi)
              <Icon w={6} h={14} color="#d0d0d0" sw={1.500}><path d="M1 1l4 6-4 6" /></Icon>
            </DocInfo>
            <HScroll>
              <IconButton aria-label="Scroll left"><Icon w={6} h={9} color="#909090" sw={1.500}><path d="M5 .5l-4 4 4 4" /></Icon></IconButton>
              <Track><Thumb /></Track>
              <IconButton aria-label="Scroll right"><Icon w={6} h={9} color="#909090" sw={1.500}><path d="M1 .5l4 4-4 4" /></Icon></IconButton>
            </HScroll>
            <ScrollCorner />
          </StatusBar>

          <LayersPanel>
            <PanelTabs>
              <PanelTab>Layers</PanelTab>
              <PanelTools>
                <IconButton aria-label="Collapse panel"><Icon w={15} h={11} sw={1.800}><path d="M1 .5l5 5-5 5M9 .5l5 5-5 5" /></Icon></IconButton>
                <Icon w={2} h={20} color="#b0b0b0"><path d="M1 0v20" /></Icon>
                <IconButton aria-label="Panel menu"><Icon w={15} h={12} sw={1.500} color="#c4c4c4"><path d="M0 1h15M0 4.300h15M0 7.600h15M0 11h15" /></Icon></IconButton>
              </PanelTools>
            </PanelTabs>
            <PanelRow $h={49} $top={8}>
              <SelectBox $w={130}>
                <Icon w={16}><circle cx="6.500" cy="6.500" r="5.300" /><path d="M10.500 10.500l4.500 4.500" strokeWidth="3" /></Icon>
                <select aria-label="Filter type"><option>Kind</option></select>
                <Chevron />
              </SelectBox>
              <FilterIcons>
                <IconButton aria-label="Filter pixel layers"><PictureIcon /></IconButton>
                <IconButton aria-label="Filter adjustment layers"><HalfIcon s={17} /></IconButton>
                <IconButton aria-label="Filter type layers"><SmallType /></IconButton>
                <IconButton aria-label="Filter shape layers"><ShapeIcon /></IconButton>
                <IconButton aria-label="Filter smart objects"><SmartIcon /></IconButton>
              </FilterIcons>
              <FilterSwitch type="checkbox" aria-label="Layer filtering" />
            </PanelRow>
            <PanelRow $h={42}>
              <SelectBox $w={194} $dim>
                <span />
                <select aria-label="Blend mode"><option>Normal</option></select>
                <Chevron color="#6c6c6c" />
              </SelectBox>
              <Value label="Opacity" />
            </PanelRow>
            <PanelRow $h={44} $bottom={4} $last>
              <Group $left={3}>Lock:</Group>
              <LockTools>
                <IconButton aria-label="Lock transparency"><CheckerIcon /></IconButton>
                <IconButton aria-label="Lock pixels"><SmallBrush /></IconButton>
                <IconButton aria-label="Lock position"><SmallMove /></IconButton>
                <IconButton aria-label="Lock nesting"><ArtboardLock /></IconButton>
                <IconButton aria-label="Lock all"><LockSolid /></IconButton>
              </LockTools>
              <Value label="Fill" />
            </PanelRow>
            <LayerArea>
              <LayerList>
                {["Artboard 2", "Artboard 1"].map((name) => (
                  <LayerItem key={name} $kind="board" $h={41}>
                    <EyeCell aria-label="Visibility"><EyeIcon /></EyeCell>
                    <Group $left={6}><IconButton aria-label="Toggle group"><Chevron w={12} /></IconButton></Group>
                    <LayerName>{name}</LayerName>
                  </LayerItem>
                ))}
                <LayerItem $kind="layer" $h={60}>
                  <EyeCell $line aria-label="Visibility"><EmptyEye /></EyeCell>
                  <Thumbnail $clear />
                  <LayerName>Boarder</LayerName>
                </LayerItem>
                <LayerItem $kind="layer" $h={48}>
                  <EyeCell $line aria-label="Visibility"><EyeIcon /></EyeCell>
                  <Thumbnail />
                  <LayerName $italic>Background</LayerName>
                  <Group $right={23}><LockOutline /></Group>
                </LayerItem>
              </LayerList>
              <LayerScroll />
            </LayerArea>
            <PanelFooter>
              <FooterButton aria-label="Link layers"><LinkIcon /></FooterButton>
              <FooterButton aria-label="Layer style" $caret="#777"><Fx>fx</Fx></FooterButton>
              <FooterButton aria-label="Add mask"><MaskIcon /></FooterButton>
              <FooterButton aria-label="New adjustment layer" $caret="#fff"><HalfIcon s={17} /></FooterButton>
              <FooterButton aria-label="New group"><FolderIcon /></FooterButton>
              <FooterButton aria-label="New layer"><PlusBoxIcon /></FooterButton>
              <FooterButton aria-label="Delete layer"><TrashIcon /></FooterButton>
            </PanelFooter>
            <PanelGrip><Grip $h={5} /></PanelGrip>
          </LayersPanel>
        </Doc>

        <DockArea>
          <StripHeader>
            <CollapseButton $w={57} $end aria-label="Expand icon dock"><Collapse /></CollapseButton>
            <CollapseButton $end aria-label="Expand panel dock"><Collapse /></CollapseButton>
          </StripHeader>
          <DockColumns>
            <DockColumn $narrow>
              <DockGroup>
                <Grip />
                <DockRows $icons><DockIconButton $on aria-label="Layers"><LayersIcon /></DockIconButton></DockRows>
              </DockGroup>
              <DockGroup>
                <Grip />
                <DockRows $icons>
                  <DockIconButton aria-label="History"><HistoryIcon /></DockIconButton>
                  <DockIconButton aria-label="Comments"><CommentIcon /></DockIconButton>
                </DockRows>
              </DockGroup>
            </DockColumn>
            <DockColumn>
              {dockGroups.map((group) => (
                <DockGroup key={group[0][0]}>
                  <Grip />
                  <DockRows>
                    {group.map(([name, Glyph]) => <DockRow key={name}><Glyph /><span>{name}</span></DockRow>)}
                  </DockRows>
                </DockGroup>
              ))}
            </DockColumn>
          </DockColumns>
        </DockArea>
      </Body>
      <Footer />
    </Shell>
  );
}
